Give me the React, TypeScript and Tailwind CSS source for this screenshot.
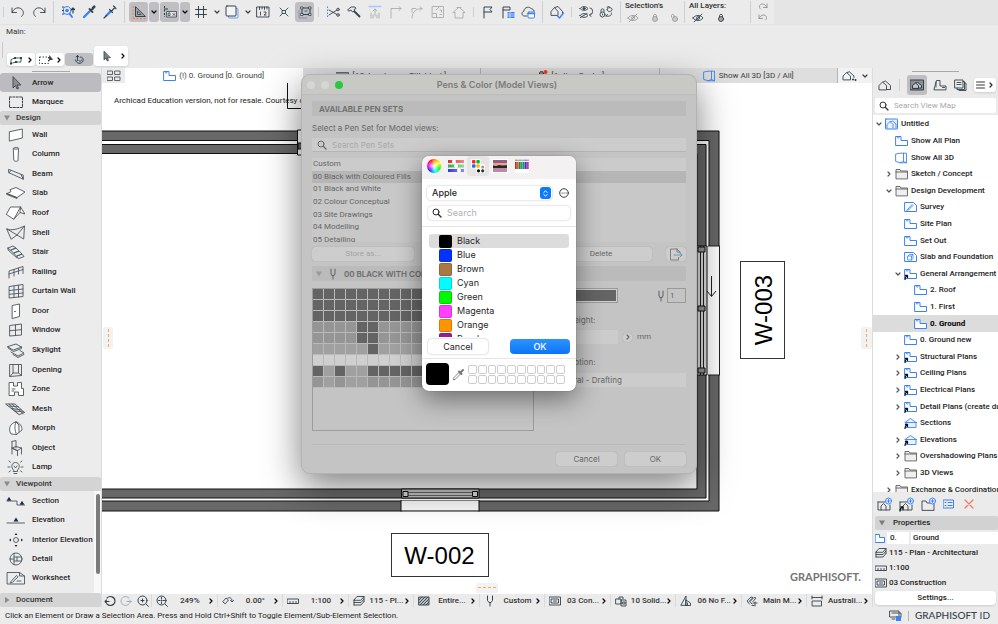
import React from "react";

type IconProps = { children: React.ReactNode; w?: number; h?: number; className?: string };

function Svg({ children, w = 16, h = 16, className = "" }: IconProps) {
  return (
    <svg
      width={w}
      height={h}
      viewBox={`0 0 ${w} ${h}`}
      fill="none"
      stroke="currentColor"
      strokeLinejoin="round"
      strokeLinecap="round"
      aria-hidden="true"
      className={`shrink-0 ${className}`}
    >
      {children}
    </svg>
  );
}

const BLUE = "#3b82f6";

function Chevron({ down = false, className = "" }: { down?: boolean; className?: string }) {
  return (
    <Svg w={6} h={6} className={className}>
      {down ? <path d="M1 2l2 2 2-2" strokeWidth="1.2" /> : <path d="M2 1l2 2-2 2" strokeWidth="1.2" />}
    </Svg>
  );
}

function SearchIcon({ className = "" }: { className?: string }) {
  return (
    <Svg w={10} h={10} className={className}>
      <circle cx="4" cy="4" r="3" />
      <path d="M6.3 6.3L9 9" strokeWidth="1.3" />
    </Svg>
  );
}

function PenFork({ className = "" }: { className?: string }) {
  return (
    <Svg w={8} h={12} className={className}>
      <path d="M2 1v4.500l1 2h2l1-2V1M4 8v3" strokeWidth="1.1" />
    </Svg>
  );
}

/* ---------- plan, folder and view glyphs ---------- */

function PlanIcon({ shortcut = false }: { shortcut?: boolean }) {
  return (
    <Svg w={13} h={12}>
      <path d="M1 1.500h5v4h6.500v5H1z" stroke={BLUE} fill="#fff" />
      <path d="M2.500 1.500v1.500h1.500V1.500" stroke={BLUE} strokeWidth=".7" />
      {shortcut && <path d="M1 11.500c0-2 .5-3 2-3.500M1.500 7.500h2v2" stroke="#111" strokeWidth="1.300" />}
    </Svg>
  );
}

function Cube3D() {
  return (
    <Svg w={13} h={12}>
      <path d="M1 2l4-.8h6.500v9.600H5L1 9.500zM8.500 1.200v8.300l3 1.300M8.500 9.500L5 10.800" stroke={BLUE} strokeWidth=".9" />
    </Svg>
  );
}

function FolderIcon() {
  return (
    <Svg w={13} h={12}>
      <path d="M1 10.500v-9h4l1 1.500h6.500v7.500zM1 4h11.500" fill="#f1efee" stroke="#5b5f63" strokeWidth=".9" />
    </Svg>
  );
}

function HomeIcon({ boxed = false }: { boxed?: boolean }) {
  return (
    <Svg w={boxed ? 13 : 14} h={12}>
      {boxed && <rect x=".5" y="1" width="12" height="10" rx=".5" stroke={BLUE} fill="#eaf2ff" />}
      <path
        d={boxed ? "M2 10V6.500L5 3.500l3 3V10M5.500 3.800L7.500 3l3.500 3V10" : "M1 10.500V6.500L4.500 3l4 3.500v4zM5 3l2.500-1 5 4.500v4h-4"}
        stroke={boxed ? BLUE : "currentColor"}
        strokeWidth=".9"
      />
    </Svg>
  );
}

function WorksheetBlue() {
  return (
    <Svg w={13} h={12}>
      <path d="M1 1.500h8.500l3 3v6H1z" stroke={BLUE} />
      <path d="M3.500 8.500L8 3.500l1 1-4.500 4.500-1.500.3z" stroke={BLUE} fill="#dbe9ff" strokeWidth=".8" />
    </Svg>
  );
}

function DetailBlue() {
  return (
    <Svg w={13} h={12}>
      <path d="M1 1.500h8.500l3 3v6H1z" stroke={BLUE} />
      <path d="M4 5h3.500v4H4zM4 5l1.500-1.500H9L7.500 5M9 3.500v4L7.500 9" stroke={BLUE} strokeWidth=".8" />
    </Svg>
  );
}

function SectionBlue() {
  return (
    <Svg w={13} h={12}>
      <path d="M1.500 5l5-3.500 5 3.500M1 5.500h11.500M2 5.500v5h10v-5" stroke={BLUE} fill="#eaf2ff" strokeWidth=".9" />
      <path d="M1 11.500c0-2 .5-3 2-3.500M1.500 7.500h2v2" stroke="#111" strokeWidth="1.300" />
    </Svg>
  );
}

/* ---------- toolbox glyphs, 20 x 16 ---------- */

const G = (children: React.ReactNode) => (
  <Svg w={20} h={16} className="text-[#4a555c]">
    <g strokeWidth=".9">{children}</g>
  </Svg>
);

const arrowShape = <path d="M8 2v11l2.500-2.500 1.500 3.500 1.500-.7-1.500-3.300h3.500z" fill="#8d8d92" stroke="#3c4650" />;

const designTools: [string, React.ReactNode][] = [
  ["Wall", G(<path d="M4.700 4.700L17.300 2v9L4.700 14z" fill="#fff" />)],
  ["Column", G(<path d="M8.300 2.500c0-1.500 5.200-1.500 5.200 0l-.5 12c0 1-4.200 1-4.200 0zM8.300 2.500c0 1 5.200 1 5.200 0" fill="#fff" />)],
  ["Beam", G(<path d="M4 3.500l14.300 5.700v4L4 6.800zM4 6.800l2-2.500M18.300 13.200L16 8.500" />)],
  ["Slab", G(<path d="M2 8.500l4-1.800-1-2L11 2.500l9 4.500-8 5.500zM2 8.500l10 4V13.500L2 9.500z" fill="#fff" />)],
  ["Roof", G(<path d="M1.500 9L5.500 2h10l4.500 7-5-1.500L9 14zM15.500 2L9 14M15.500 2L15 7.500" fill="#fff" />)],
  ["Shell", G(<path d="M2 4c5 2 11 0 17.500-3l-.8 13-6.700-4-5.500 4zM19.500 1L12 10M2 4l10 6" />)],
  ["Stair", G(<path d="M3 4l5-2 3 2-5 2zM6 6l5-2 3 3-5 2zM9 9l5-2 3 3-5 2zM12 12l5-2 2 2.500-5 2zM3 4v2l9 8" />)],
  ["Railing", G(<path d="M4 14V7l14-4.500v7M4 10l14-4.500M9 12V5.500M13.500 10V4" />)],
  ["Curtain Wall", G(<path d="M4.500 3.500L18 1.500v12l-13.500 1.500zM9 3v11.500M13.500 2.300V14M4.500 7.500L18 6M4.500 11.300L18 10" />)],
  ["Door", G(<path d="M7.500 2.500l7-1.500v12.500l-7 2zM9.500 8.500h1" fill="#fff" />)],
  ["Window", G(<path d="M5 3.500l11.500-1.500v11L5 14zM10.500 3v10.500M5 8.700L16.500 7.700" />)],
  ["Skylight", G(<path d="M3 4.500l8-2.500 5.500 3-8 3zM3 4.500v1.500l5.500 3.500 8-3V5M6 10l7 4 6-3-4-2.500M8 12.500l5 3 6-3" />)],
  ["Opening", G(<path d="M5 2.500h11.500v11L5 14.500zM8 2.500v8.500h5.500V2.500M8 11l-3 3.500M13.500 11l3 2.500" />)],
  ["Zone", G(<path d="M4.500 1.500h4V5h4V1.500h4v6h2v7h-5V11h-4v3.500h-5zM7 8h3M7 10h2" fill="#fff" />)],
  ["Mesh", G(<path d="M1 3h9l9.500 8.500-5 2zM4 5l9.500.8M7 7.500l9.500 1.500M10 10l9 1M4 3l9 10M7 3l11 9.500" />)],
  ["Morph", G(<path d="M11 2c-6 1-8 7-5 12l5.500.5L17 10c0-4-2-7-6-8zM11 2c-2 5-1 8.500.5 12.500M11 2l3 3v7" fill="#fff" />)],
  ["Object", G(<path d="M7 1.500l4-1v7.500M7 1.500V14M7 8l4-1.500 5.500 1.500-4 2.500zM12.500 10.500V16M16.500 8v6M7 8l5.500 2.500" />)],
  [
    "Lamp",
    G(
      <>
        <path d="M8.500 11c-3-2.500-2-7.500 2-7.500s5 5 2 7.500v1.500h-4zM9 14.500h3M9 7l1.500 2L12 7" />
        <path d="M4 2l1.500 1.200M17 2l-1.500 1.200M3 8h2M16 8h2M4 13l1.500-1.200M17 13l-1.500-1.200" />
      </>,
    ),
  ],
];

const dark = "#1f2b3a";

const viewTools: [string, React.ReactNode][] = [
  [
    "Section",
    G(
      <>
        <path d="M2 8h10v4h8" />
        <path d="M2.500 7L4 4.500 5.500 7zM15.500 11L17 8.500 18.500 11z" fill={dark} stroke={dark} />
      </>,
    ),
  ],
  [
    "Elevation",
    G(
      <>
        <path d="M2 11h17.500" />
        <path d="M8.500 9.500l2.500-4 2.500 4z" fill={dark} stroke="none" />
      </>,
    ),
  ],
  [
    "Interior Elevation",
    G(
      <>
        <circle cx="11" cy="8" r="2.500" />
        <path d="M9.500 3L11 1l1.500 2zM9.500 13l1.500 2 1.500-2zM6 6.500L4 8l2 1.500zM16 6.500L18 8l-2 1.500z" fill={dark} stroke="none" />
      </>,
    ),
  ],
  [
    "Detail",
    G(
      <>
        <circle cx="11" cy="8" r="6" />
        <path d="M9 2.300v11.400M9 6h7.500M9 10h7.500M12 6v4M5 8h4" />
      </>,
    ),
  ],
  [
    "Worksheet",
    G(
      <>
        <path d="M2.500 2.500h12L19.500 6v8h-17zM14.500 2.500V6h5" />
        <path d="M6 11.500l5.500-6 1.500 1.300-5.500 5.500-2 .5zM12 11h4" />
      </>,
    ),
  ],
];

function ToolButton({ label, icon, active = false, grow = false }: { label: string; icon: React.ReactNode; active?: boolean; grow?: boolean }) {
  return (
    <button
      type="button"
      className={`flex w-full items-center gap-[7px] whitespace-nowrap pl-[5px] text-left text-[8px] font-medium text-[#262626] ${
        active ? "rounded-[3px] bg-[#bcbbc0]" : ""
      } ${grow ? "min-h-0 flex-1" : "h-[19px] shrink-0"}`}
    >
      {icon}
      {label}
    </button>
  );
}

function SideHeading({ label, open = true }: { label: string; open?: boolean }) {
  return (
    <button type="button" className="flex h-[14px] w-full shrink-0 items-center gap-[6px] rounded-[2px] bg-[#d4d4d4] pl-1 text-left text-[8px] font-medium text-[#333]">
      <Svg w={6} h={6}>
        {open ? <path d="M0 .5h6L3 5.500z" fill="#8b8b8b" stroke="none" /> : <path d="M1 0v6l4.500-3z" fill="#8b8b8b" stroke="none" />}
      </Svg>
      {label}
    </button>
  );
}

function Toolbox() {
  return (
    <aside className="flex w-[102px] shrink-0 flex-col border-r border-[#dcdcdc] bg-[#edecec]">
      <div className="flex h-[5px] shrink-0 justify-center pt-[3px]">
        <div className="h-px w-[38px] bg-[#a9a9a9]" />
      </div>
      <ToolButton active label="Arrow" icon={G(arrowShape)} />
      <ToolButton label="Marquee" icon={G(<rect x="4.500" y="3" width="13" height="10.500" strokeDasharray="2 1.400" stroke="#222c35" />)} />
      <SideHeading label="Design" />
      <div className="flex min-h-0 flex-1 flex-col">
        {designTools.map(([label, icon]) => (
          <ToolButton key={label} label={label} icon={icon} grow />
        ))}
      </div>
      <SideHeading label="Viewpoint" />
      <div className="flex h-[102px] shrink-0 overflow-hidden">
        <div className="flex h-[97px] w-[94px] shrink-0 flex-col">
          {viewTools.map(([label, icon]) => (
            <ToolButton key={label} label={label} icon={icon} grow />
          ))}
        </div>
        <div className="flex-1 bg-[#f8f8f8] px-[2px] pt-[3px]">
          <div className="h-20 w-1 rounded-full bg-[#7b7b7b]" />
        </div>
      </div>
      <SideHeading label="Document" open={false} />
    </aside>
  );
}

/* ---------- top toolbars ---------- */

function Tool({ label, children, tone = "normal", narrow = false, on = false }: { label: string; children: React.ReactNode; tone?: "normal" | "dim"; narrow?: boolean; on?: boolean }) {
  return (
    <button
      type="button"
      aria-label={label}
      className={`flex h-5 items-center justify-center ${narrow ? "w-[9px]" : on ? "w-[19px]" : "w-5"} ${on ? "rounded-[3px] bg-[#bfbec3]" : ""} ${
        tone === "dim" ? "text-[#a9abad]" : "text-[#36424b]"
      }`}
    >
      {children}
    </button>
  );
}

const Sep = ({ tall = false }: { tall?: boolean }) => <div className={`mx-[3px] w-px shrink-0 bg-[#cfcfcf] ${tall ? "h-[22px]" : "h-[10px]"}`} />;

function EyeOff({ className = "" }: { className?: string }) {
  return (
    <Svg w={12} h={10} className={className}>
      <path d="M1 5c2.500-3.500 7.500-3.500 10 0-2.500 3.500-7.500 3.500-10 0zM10 1L2 9" strokeWidth=".9" />
      <circle cx="6" cy="5" r="1.500" strokeWidth=".8" />
    </Svg>
  );
}

function Lock({ className = "", open = false }: { className?: string; open?: boolean }) {
  return (
    <Svg w={10} h={10} className={className}>
      <circle cx="5" cy="6" r="2.500" fill="currentColor" fillOpacity=".4" strokeWidth=".9" />
      <path d={open ? "M1.500 4V2.500c0-1.500 2.500-1.500 2.500 0V4" : "M3.500 4V2.500c0-1.500 3-1.500 3 0V4"} strokeWidth=".9" />
    </Svg>
  );
}

function TopBar() {
  return (
    <header className="h-[68px] shrink-0 bg-[#ebebeb]">
      <div className="flex h-[25px] border-b border-[#e2e2e2] bg-[#e5e5e5]">
        <div className="flex w-[774px] items-center gap-px bg-[#ebebeb]">
          <Sep />
          <Tool label="Undo"><Svg><path d="M2 4v4.500h4.500M2 8.500c2-5 7-6 10-3 2.500 3 1 6-.5 7" strokeWidth=".9" /></Svg></Tool>
          <Tool label="Redo"><Svg><path d="M14 4v4.500H9.500M14 8.500c-2-5-7-6-10-3-2.500 3-1 6 .5 7" strokeWidth=".9" /></Svg></Tool>
          <Sep tall />
          <Tool label="Find and select">
            <Svg>
              <circle cx="7" cy="6.500" r="4" stroke={BLUE} />
              <circle cx="7" cy="6.500" r="1.800" fill={BLUE} stroke="none" />
              <path d="M9.500 9.500l2.500 3.500" stroke={BLUE} strokeWidth="2" />
              <path d="M2.500 3h1M2.500 6.500h1M2.500 10h1M13 9V4M11.500 5.500L13 4l1.500 1.500" strokeWidth="1.200" />
            </Svg>
          </Tool>
          <Tool label="Pick up parameters">
            <Svg>
              <path d="M3 13l5.500-5.500" stroke={BLUE} strokeWidth="2.400" />
              <path d="M8.500 5l3 3M10 6.500l2-2" strokeWidth="1.800" />
              <path d="M12 4l1.300-1.300" strokeWidth="2.600" />
            </Svg>
          </Tool>
          <Tool label="Inject parameters">
            <Svg>
              <path d="M4.500 11.500L8.500 7.500" stroke={BLUE} strokeWidth="2.400" />
              <path d="M2 14l2.500-2.500M7.500 5.500l3 3M9.500 7l3.500-3.500M11.500 2l2.500 2.500" strokeWidth="1.200" />
            </Svg>
          </Tool>
          <Sep tall />
          <div className="flex gap-px">
            <Tool on label="Guide lines">
              <Svg>
                <path d="M2 2v12.500M2 14.500h12.500" stroke="#f08228" strokeDasharray="2 1.500" strokeLinecap="butt" />
                <path d="M4.500 3v9.500h9.500z" fill="#a3a4a9" />
                <path d="M6.500 7.500v3h3z" fill="#bfbec3" strokeWidth=".8" />
              </Svg>
            </Tool>
            <button type="button" aria-label="Guide line options" className="flex h-5 w-[10px] items-center justify-center rounded-[3px] bg-[#bfbec3]"><Chevron down /></button>
            <Tool on label="Tracker">
              <Svg>
                <path d="M2.500 2v2M2.500 5.500v2M2.500 9v2M2.500 12.500v.5M2 5h4" stroke="#2f3a42" strokeLinecap="butt" />
                <path d="M5 7.500h9.500v5.500H5z" fill="#e4e4e7" strokeWidth=".8" />
                <path d="M6.500 9h1.500v2.500H6.500zM11 9.500l2 2M13 9.500l-2 2" strokeWidth=".8" />
              </Svg>
            </Tool>
            <button type="button" aria-label="Tracker options" className="flex h-5 w-[10px] items-center justify-center rounded-[3px] bg-[#bfbec3]"><Chevron down /></button>
          </div>
          <Tool label="Grid"><Svg><path d="M5.500 2.500v11M10.500 2.500v11M2.500 5.500h11M2.500 10.500h11" /></Svg></Tool>
          <Tool narrow label="Grid options"><Chevron down /></Tool>
          <Tool label="Trace reference">
            <Svg>
              <rect x="4.500" y="4.500" width="9.500" height="9.500" rx="1" stroke="#6ba0f5" />
              <rect x="2" y="2" width="10" height="10" rx="1" fill="#f4f4f4" />
            </Svg>
          </Tool>
          <Tool narrow label="Trace options"><Chevron down /></Tool>
          <Tool label="Measure">
            <Svg>
              <path d="M2 3h12v10H2zM4.500 3v2.500M7 3v2M9.500 3v2.500M12 3v2M5.500 8v3M9 8h2v1.500L9 11h2" strokeWidth=".9" />
            </Svg>
          </Tool>
          <Tool label="Explode"><Svg><path d="M4 4l2.500 2.500M12 4L9.500 6.500M4 12l2.500-2.500M12 12L9.500 9.500M6.500 6.500h3v3h-3z" strokeWidth=".9" /></Svg></Tool>
          <Tool on label="Group">
            <Svg>
              <path d="M2 6.500V14h7.500" stroke="#8b8d92" strokeDasharray="1 1" />
              <path d="M5 4h8M5 10.500h8M5 4v6.500M13 4v6.500" />
              <path d="M4 3h2v2H4zM12 3h2v2h-2zM4 9.500h2v2H4zM12 9.500h2v2h-2zM8 7h2" fill="#eee" strokeWidth=".8" />
            </Svg>
          </Tool>
          <Sep />
          <Tool label="Trim">
            <Svg>
              <path d="M2.500 2.500v11" stroke={BLUE} strokeDasharray="1.500 1.500" strokeLinecap="butt" />
              <path d="M4 6l8 4.500M4 11l8-5" strokeWidth=".9" />
              <circle cx="13" cy="5.500" r="1.300" strokeWidth=".9" /><circle cx="13" cy="11" r="1.300" strokeWidth=".9" />
            </Svg>
          </Tool>
          <Tool label="Adjust">
            <Svg><path d="M2 5.500L5 3h4l1 1.500-2 1 .5 1.500L6.500 8 5 6l-2 1z" strokeWidth=".9" /><path d="M8.500 7.500l5 5" strokeWidth="1.800" /></Svg>
          </Tool>
          <Tool tone="dim" label="Extend"><Svg><path d="M2 2.500h12" stroke="#a8c8fb" strokeWidth="1.400" /><path d="M8 12V5M6 7l2-2 2 2M4 9v5M6 11v3M10 11v3M12 9v5" strokeWidth=".9" /></Svg></Tool>
          <Tool tone="dim" label="Corner"><Svg><path d="M3 14V4.500h10M11 2.500l2 2-2 2" strokeWidth=".9" /></Svg></Tool>
          <Tool tone="dim" label="Fillet"><Svg><path d="M3 14c0-5 3-9.500 10-9.500M11 2.500l2 2-2 2M3 8V4.500h4" strokeWidth=".9" /></Svg></Tool>
          <Tool tone="dim" label="Resize"><Svg><rect x="2.500" y="2.500" width="11" height="11" strokeWidth=".9" /><path d="M2.500 9.500h4v4M6 6l3-3M10 6h1.500v2M10 10.500h1.500" strokeWidth=".9" /></Svg></Tool>
          <Tool tone="dim" label="Roof trim"><Svg><path d="M2 8.500L8 3l6 5.500h-2V14H4V8.500zM6 3.500h4" strokeWidth=".9" /></Svg></Tool>
          <Sep />
          <div className="flex">
            <Tool label="Flag"><Svg><path d="M4 14V3h8l-2 2.500L12 8H4" /></Svg></Tool>
            <Tool label="Issue list">
              <Svg><path d="M3 14V3h7v3H3" /><path d="M7.500 8h7v6h-7z" fill={BLUE} stroke="none" /><path d="M7.500 10h7M7.500 12h7M10 8v6" stroke="#fff" strokeWidth=".6" /></Svg>
            </Tool>
            <Tool label="Cloud">
              <Svg><path d="M7 12H4.500C1.500 12 1 8 4 7c0-4 6-5 7.500-2 2 0 3 1.500 2.500 3" strokeWidth=".9" /><rect x="8" y="8" width="6.500" height="6" rx="1" fill="#fff" stroke={BLUE} /><path d="M8 9.500h6.500" stroke={BLUE} strokeWidth="1.600" /></Svg>
            </Tool>
          </div>
          <Sep tall />
          <Tool label="Model check"><Svg><path d="M2 11V7.500L5.500 3.500 9 7.500V11zM6 3.500L9 2.500l4.500 5V9" strokeWidth=".9" /><path d="M8.500 12l2 2 4-5" stroke={BLUE} strokeWidth="1.400" /></Svg></Tool>
          <Sep />
          <div className="flex">
            <Tool label="Layer visibility"><Svg><path d="M2 4.500c2-2.500 6-2.500 8 0-2 2.500-6 2.500-8 0zM2 11.500c2-2.500 6-2.500 8 0-2 2.500-6 2.500-8 0zM2.500 13.500L9 9.500M12 4c2 0 2.500 1.500 2.500 3.500S13.500 11 12 11M13 9.500L11.500 11l1.500 1.500" strokeWidth=".9" /><circle cx="6" cy="4.500" r="1" fill="currentColor" /></Svg></Tool>
            <Tool label="Layer locks"><Svg><circle cx="4.500" cy="10.500" r="2.500" strokeWidth=".9" /><path d="M3 8V6c0-1.500 3-1.500 3 0v2M4.500 10v1M9 3.500c0-1.500 3-1.500 3 0M9 5.500c0-2.500 5-2.500 5 0s-5 3-5 0M8 12c4 1 6-1 5.500-3M8 12l1.500-1.500" strokeWidth=".9" /></Svg></Tool>
          </div>
          <Sep tall />
          <div className="flex h-[22px] w-[55px] shrink-0 flex-col justify-between text-[8px] leading-[10px] font-medium text-[#2f2f2f]">
            <span className="whitespace-nowrap">Selection's</span>
            <div className="flex justify-between pl-[2px] text-[#9a9c9e]">
              <EyeOff /><Lock /><Lock open />
            </div>
          </div>
          <Sep tall />
          <div className="flex h-[22px] w-[57px] shrink-0 flex-col justify-between text-[8px] leading-[10px] font-medium text-[#2f2f2f]">
            <span className="whitespace-nowrap">All Layers:</span>
            <div className="flex gap-3 pl-[3px] text-[#36424b]">
              <EyeOff /><Lock />
            </div>
          </div>
          <Sep tall />
          <div className="flex flex-col gap-[2px] pl-[3px] text-[#8f9193]">
            <Svg w={10} h={9}><path d="M9 2v3.500H5.500M9 5.500C7 1 2 1 1.500 4.500c0 1.500.5 2 1 2.500" strokeWidth=".9" /></Svg>
            <Svg w={10} h={9}><path d="M1 2v3.500h3.500M1 5.500C3 1 8 1 8.500 4.500c0 1.500-.5 2-1 2.500" strokeWidth=".9" /></Svg>
          </div>
        </div>
      </div>
      <div className="px-[6px] pt-[1px] text-[8px] leading-[12px] text-[#333]">Main:</div>
      <div className="flex items-end pt-1 pl-[2px]">
        <div className="mr-1 mb-2 h-4 w-px bg-[#c9c9c9]" />
        <div className="flex items-end gap-px">
          <button type="button" aria-label="Geometry method" className="flex h-[13px] w-7 items-center justify-between rounded-[3px] bg-white px-[2px] shadow-sm">
            <Svg w={16} h={10}><path d="M2 8.500V4.500l4-1.500h6v4H7L2 8.500z" stroke="#36424b" strokeWidth=".9" strokeDasharray="2 1" /><path d="M1 7.500h2v2H1zM5 2h2v2H5zM11 2h2v2h-2zM6 6h2v2H6z" fill="#36424b" stroke="none" /></Svg>
            <Chevron />
          </button>
          <button type="button" aria-label="Selection method" className="flex h-[13px] w-7 items-center justify-between rounded-[3px] bg-white px-[2px] shadow-sm">
            <Svg w={16} h={10}><rect x="1.500" y="2" width="9" height="6.500" strokeDasharray="1.500 1.500" stroke="#36424b" strokeLinecap="butt" /><path d="M11.500 1v4.500L12.700 4.500h1.600z" fill="#222" stroke="#222" strokeWidth=".6" /></Svg>
            <Chevron />
          </button>
          <button type="button" aria-label="Magnet" className="flex h-[13px] w-7 items-center justify-center rounded-[3px] bg-[#bfbec3]">
            <Svg w={12} h={11}><path d="M4.500 1.500v5M4.500 1.500L3 3M4.500 1.500L6 3M2.500 6c.5 4 6 4.500 7.500 1 .8-2-.5-4-2.500-4M6 6.500c.5 1.500 2.500 1 2.500-.5" stroke="#36424b" strokeWidth="1" /></Svg>
          </button>
          <button type="button" aria-label="Arrow tool" className="flex h-5 w-[34px] items-center justify-between rounded-[3px] bg-white pr-[2px] pl-2 shadow-sm">
            <Svg w={10} h={12}><path d="M2 1.500v8.500l2-2 1.300 3 1.200-.6-1.200-2.700H8z" fill="#7b8087" stroke="#36424b" strokeWidth=".8" /></Svg>
            <Chevron />
          </button>
        </div>
      </div>
    </header>
  );
}

/* ---------- centre: tabs, drawing, quick options ---------- */

function Tab({ icon, label, active = false }: { icon: React.ReactNode; label: string; active?: boolean }) {
  return (
    <button
      type="button"
      role="tab"
      aria-selected={active}
      className={`flex min-w-0 flex-1 items-center justify-center gap-[3px] border-r border-[#b5b5b5] text-[8px] whitespace-nowrap text-[#3d3d3d] ${
        active ? "border-none bg-white" : "bg-[#dedede]"
      }`}
    >
      {icon}
      {label}
    </button>
  );
}

function Tabs() {
  return (
    <div role="tablist" className="flex h-[15px] shrink-0">
      <button type="button" aria-label="All tabs" className="flex w-[23px] items-center justify-center bg-[#ebebeb] text-[#5d6468]">
        <Svg w={14} h={12}><path d="M.5 1h5v3.500h-5zM8 1h5v3.500H8zM.5 7h5v3.500h-5zM8 7h5v3.500H8z" /></Svg>
      </button>
      <Tab active icon={<PlanIcon />} label="(!) 0. Ground [0. Ground]" />
      <Tab icon={<Svg w={13} h={10}><rect x=".5" y="1.500" width="12" height="8" fill="#8e9cab" stroke="#5f6c79" /></Svg>} label="[A2. Landscape Titleblock]" />
      <Tab
        icon={<Svg w={13} h={13}><path d="M3 6h8v5H3zM4.500 6V4c0-2 4-2 4 0v2" stroke="#444" fill="#888" /><circle cx="10.500" cy="3" r="2" fill="#ff3b20" stroke="none" /></Svg>}
        label="[Action Center]"
      />
      <Tab icon={<Cube3D />} label="Show All 3D [3D / All]" />
      <button type="button" aria-label="3D view options" className="flex w-[34px] items-center justify-center gap-1 bg-[#f2f2f2] text-[#36424b]">
        <Svg w={16} h={12}>
          <path d="M1 9.500V6L4.500 2.500 8.500 6v3.500zM5 2.500L7.500 1.800 12 6v1.500" strokeWidth=".9" />
          <path d="M10 9.500h2M13.500 9v2" strokeWidth="1.600" strokeLinecap="butt" />
        </Svg>
        <Chevron down />
      </button>
    </div>
  );
}

function Drawing() {
  const wall = "#686868";
  return (
    <svg width="770" height="511" viewBox="102 83 770 511" className="block max-w-none" role="img" aria-label="Floor plan">
      <rect x="102" y="83" width="770" height="511" fill="#fff" />
      <text x="114" y="103" fontSize="8" fontFamily="Roboto, Liberation Sans, sans-serif" fill="#222">Archicad Education version, not for resale. Courtesy of</text>
      <path d="M287.500 83v25.500H320" fill="none" stroke="#111" />
      {/* outer leaf */}
      <path d="M90 131h629v380H90V501h619V140.500H90z" fill={wall} stroke="#111" />
      {/* inner leaf */}
      <path d="M90 144.500h616V498H90v-9h607V153.500H90z" fill={wall} stroke="#111" />
      {/* north opening */}
      <path d="M297.500 130h10v25h-10z" fill="#fff" stroke="#111" />
      <path d="M298 143h6v6h-6z" fill="#666" stroke="#111" />
      {/* east window */}
      <path d="M708 246h12v129h-12z" fill="#fff" />
      <path d="M719.500 246v129M708 246h12M708 375h12" stroke="#222" />
      <path d="M697 246h10v129h-10z" fill="#e4e4e4" stroke="#111" />
      <path d="M700.500 246v129M703.500 246v129" stroke="#222" />
      <path d="M698 247h7v5h-7zM698 306h7v5h-7zM698 368h7v5h-7z" fill="#999" stroke="#111" />
      <path d="M711.500 276v20M707 291l4.500 5.500 4.500-5.500" fill="none" stroke="#222" />
      {/* south window */}
      <path d="M401 501h78v10h-78z" fill="#f8f8f8" />
      <path d="M401 510.500h78" stroke="#777" />
      <path d="M401 500v11.500M479 500v11.500" stroke="#111" />
      <path d="M401.500 489h77.500v9h-77.500z" fill="#c4c4c4" stroke="#111" />
      <path d="M408 492.500h65M408 495.500h65" stroke="#666" />
      <path d="M403 491.500h5v5h-5zM472.500 491.500h5v5h-5z" fill="#ddd" stroke="#111" />
      {/* tags */}
      <rect x="391.500" y="533.500" width="97" height="43" fill="#fff" stroke="#333" />
      <text x="439.500" y="564" textAnchor="middle" fontSize="24" fontFamily="Liberation Sans, Arial, sans-serif" fill="#000">W-002</text>
      <rect x="740.500" y="261.500" width="44" height="97" fill="#fff" stroke="#333" />
      <text x="772" y="310" textAnchor="middle" fontSize="24" fontFamily="Liberation Sans, Arial, sans-serif" fill="#000" transform="rotate(-90 772 310)">W-003</text>
      {/* palette handles */}
      <rect x="103" y="327" width="10" height="22" rx="2" fill="#f2f2f2" />
      <path d="M108.500 329v18" stroke="#f3a662" strokeDasharray="3 2" />
      <rect x="861" y="327" width="11" height="22" rx="2" fill="#f2f2f2" />
      <path d="M866.500 329v18" stroke="#f3a662" strokeDasharray="3 2" />
      <rect x="476" y="583" width="22" height="10" rx="2" fill="#f2f2f2" />
      <path d="M478 587.500h18" stroke="#f3a662" strokeDasharray="3 2" />
      <text x="790" y="581" fontSize="11" fontWeight="700" fontFamily="Lato, sans-serif" fill="#757575">GRAPHISOFT.</text>
    </svg>
  );
}

const layersPath = <path d="M1 5l3-3.500h7L8 5zM1 7.500h7L11 4M1 10h7l3-3.500M1 5v5M11 1.500v5" strokeWidth=".9" />;
const scalePath = <path d="M.5 4h11v4.500H.5zM3 6.500v2M6 6.500v2M9 6.500v2" strokeWidth=".9" />;
const structPath = <path d="M.5 2h11v8H.5zM2.500 4h7v4h-7zM4.500 6h3" strokeWidth=".9" />;

const quickOptions: [string, React.ReactNode][] = [
  ["249%", <g key="z"><circle cx="5.500" cy="5.500" r="4.500" /><path d="M9 9l2.500 2.500M5.500 2.500v1.500M5.500 7v1.500M2.500 5.500h1.500M7 5.500h1.500" /><path d="M5.500 5.500h.1" strokeWidth="1.500" /></g>],
  ["0.00°", <path key="r" d="M1 6.500l3-3.500 2.500 2-3 3.500zM6 3c2-1 4 0 4 3M8.500 5.500L10 7l1.500-1.500" strokeWidth=".9" />],
  ["1:100", scalePath],
  ["115 - Pl...", layersPath],
  ["Entire...", <g key="e" strokeWidth=".9"><path d="M1 2h10v8H1z" fill="currentColor" fillOpacity=".25" /><path d="M1 5l3-3M1 8l6-6M2 10l8-8M5 10l6-6M8 10l3-3" /></g>],
  ["Custom", <path key="c" d="M3.500 1v4.500l1.500 2h2l1.500-2V1M6 8v3" />],
  ["03 Con...", structPath],
  ["10 Solid...", <path key="s" d="M1 4h5v5H1zM4 4V2h4v2M6.500 5H11v6H6.500zM8 7h2v2H8z" strokeWidth=".9" />],
  ["06 No F...", <path key="n" d="M1 10L6 1v9zM6 5l4.500 3v2.500H6zM7.500 8v2" strokeWidth=".9" />],
  ["Main M...", <path key="m" d="M3.500 9L1 6l4-4 2 .5-4 4M6 9L4 6.500l4-4 2 .5-3 3.500M7 8h4M9 7v4M6 10.500h2" strokeWidth=".9" />],
  ["Australi...", <path key="a" d="M1 2.500h10M1 1v3M11 1v3M1.500 6h9v5h-9z" strokeWidth=".9" />],
];

function QuickBar() {
  return (
    <div className="flex h-[13px] shrink-0 bg-[#ebebeb] text-[#36424b]">
      <div className="flex w-[49px] items-center justify-around">
        <Svg w={12} h={12}><path d="M1 6.500h4M1 6.500L2.500 5M1 6.500L2.500 8M3 3c3-3 8-1 8 3s-5 6-8 3" strokeWidth="1.100" /></Svg>
        <Svg w={12} h={12} className="text-[#a9abad]"><path d="M11 6.500H7M11 6.500L9.500 5M11 6.500L9.500 8M9 3C6 0 1 2 1 6s5 6 8 3" /></Svg>
        <Svg w={12} h={12}><circle cx="5.500" cy="5.500" r="4.500" /><path d="M9 9l2.500 2.500M5.500 4v3M4 5.500h3" /></Svg>
      </div>
      {quickOptions.map(([label, icon]) => (
        <button key={label} type="button" className="flex min-w-0 flex-1 items-center border-l border-[#dadada] pr-[3px] pl-1 text-[8px] font-medium whitespace-nowrap text-[#333]">
          <Svg w={12} h={12} className="text-[#36424b]">{icon}</Svg>
          <span className="min-w-0 flex-1 pl-1 text-center">{label}</span>
          <Chevron className="text-black" />
        </button>
      ))}
    </div>
  );
}

/* ---------- navigator ---------- */

type Node = { label: string; depth: number; icon: React.ReactNode; state?: "open" | "closed"; current?: boolean };

const tree: Node[] = [
  { label: "Untitled", depth: 0, icon: <HomeIcon boxed />, state: "open" },
  { label: "Show All Plan", depth: 1, icon: <PlanIcon /> },
  { label: "Show All 3D", depth: 1, icon: <Cube3D /> },
  { label: "Sketch / Concept", depth: 1, icon: <FolderIcon />, state: "closed" },
  { label: "Design Development", depth: 1, icon: <FolderIcon />, state: "open" },
  { label: "Survey", depth: 2, icon: <WorksheetBlue /> },
  { label: "Site Plan", depth: 2, icon: <PlanIcon /> },
  { label: "Set Out", depth: 2, icon: <PlanIcon /> },
  { label: "Slab and Foundation", depth: 2, icon: <DetailBlue /> },
  { label: "General Arrangement", depth: 2, icon: <PlanIcon shortcut />, state: "open" },
  { label: "2. Roof", depth: 3, icon: <PlanIcon /> },
  { label: "1. First", depth: 3, icon: <PlanIcon /> },
  { label: "0. Ground", depth: 3, icon: <PlanIcon />, current: true },
  { label: "0. Ground new", depth: 2, icon: <PlanIcon /> },
  { label: "Structural Plans", depth: 2, icon: <PlanIcon shortcut />, state: "closed" },
  { label: "Ceiling Plans", depth: 2, icon: <PlanIcon shortcut />, state: "closed" },
  { label: "Electrical Plans", depth: 2, icon: <PlanIcon shortcut />, state: "closed" },
  { label: "Detail Plans (create duplicates)", depth: 2, icon: <PlanIcon shortcut />, state: "closed" },
  { label: "Sections", depth: 2, icon: <SectionBlue /> },
  { label: "Elevations", depth: 2, icon: <SectionBlue />, state: "closed" },
  { label: "Overshadowing Plans", depth: 2, icon: <FolderIcon />, state: "closed" },
  { label: "3D Views", depth: 2, icon: <FolderIcon />, state: "closed" },
  { label: "Exchange & Coordination", depth: 1, icon: <FolderIcon />, state: "closed" },
];

const indent = ["pl-[3px]", "pl-[13px]", "pl-[22px]", "pl-[32px]"];

function Navigator() {
  return (
    <aside className="flex w-[126px] shrink-0 flex-col overflow-hidden border-l border-[#dcdcdc] bg-[#ebebeb] text-[8px] font-medium text-[#222]">
      <div className="flex h-[5px] shrink-0 justify-center pt-[3px]">
        <div className="h-px w-[47px] bg-[#a9a9a9]" />
      </div>
      <div className="flex h-6 shrink-0 items-center justify-between pr-[2px] pl-[5px] text-[#36424b]">
        <button type="button" aria-label="Project map"><HomeIcon /></button>
        <div className="h-3 w-px bg-[#cfcfcf]" />
        <button type="button" aria-label="View map" className="flex h-5 w-5 items-center justify-center rounded-[3px] bg-[#bfbec3]">
          <Svg w={14} h={12}><rect x=".5" y="1" width="13" height="10" fill="#8b8e93" /><path d="M2.500 9V6.500L5.500 4l3 2.500V9zM6 4l1.500-.7L11.500 6.500V9h-3" strokeWidth=".9" stroke="#222c35" fill="#c6c6ca" /></Svg>
        </button>
        <button type="button" aria-label="Layout book"><Svg w={14} h={12}><path d="M1 10.500L3.500 1.500h3.500v5.500h6v3.500zM9.500 8.500h2M3 8V3" strokeWidth=".9" /></Svg></button>
        <button type="button" aria-label="Publisher sets"><Svg w={13} h={12}><path d="M1 1h8v8H1zM9 2.500h1.500v8H3V9M10.500 4H12v7.500H5M3 3.500h4M3 5.500h4" strokeWidth=".9" /></Svg></button>
        <button type="button" aria-label="Navigator menu" className="flex h-[14px] w-[22px] items-center justify-around rounded-[3px] bg-white text-[#222] shadow-sm">
          <Svg w={9} h={8}><path d="M.5 1h8M.5 4h8M.5 7h8" strokeWidth=".9" /></Svg>
          <Chevron />
        </button>
      </div>
      <label className="mx-[2px] mt-px flex h-[15px] shrink-0 items-center gap-[5px] rounded-[2px] bg-white pl-1 text-[#333]">
        <SearchIcon />
        <input type="text" aria-label="Search view map" placeholder="Search View Map" className="w-full bg-transparent text-[8px] font-normal outline-none placeholder:text-[#a9a9a9]" />
      </label>
      <div className="mt-[2px] min-h-0 flex-1 overflow-hidden bg-white">
        <div className="flex h-[383px] flex-col pt-px">
          {tree.map((n) => (
            <button
              key={n.label}
              type="button"
              className={`flex min-h-0 flex-1 items-center gap-[3px] whitespace-nowrap ${indent[n.depth]} ${n.current ? "bg-[#dcdcdc] font-bold text-black" : ""}`}
            >
              <span className="flex w-[6px] shrink-0 text-[#555]">{n.state && <Chevron down={n.state === "open"} />}</span>
              {n.icon}
              <span>{n.label}</span>
            </button>
          ))}
        </div>
      </div>
      <div className="flex h-6 shrink-0 items-center gap-[7px] pl-1 text-[#36424b]">
        {[0, 1, 2].map((i) => (
          <button key={i} type="button" aria-label={["Save view", "Clone folder", "New folder"][i]}>
            <Svg w={15} h={15}>
              <path d={i === 2 ? "M1 13V4h4l1 2h7v7z" : "M1 5h7M1 5v8h12V8M4 13V9l2.500-2.500L9 9v4"} strokeWidth=".9" />
              {i === 1 && <path d="M1 14c0-2 .5-3 2-3.500M2 10h2v2" stroke="#111" strokeWidth="1.300" />}
              <circle cx="11.500" cy="4" r="3" fill="#fff" stroke={BLUE} />
              <path d="M11.500 2.500v3M10 4h3" stroke={BLUE} />
            </Svg>
          </button>
        ))}
        <button type="button" aria-label="View settings"><Svg w={11} h={10}><path d="M.5 1h10v8H.5zM2 3.500h1M2 6.500h1M5 3.500h4M5 6.500h4" stroke={BLUE} /></Svg></button>
        <button type="button" aria-label="Delete view" className="ml-[3px]"><Svg w={10} h={10}><path d="M1 1l8 8M9 1L1 9" stroke="#f47762" strokeWidth="1.200" /></Svg></button>
      </div>
      <div className="flex h-[91px] shrink-0 flex-col pl-[2px]">
        <button type="button" className="flex h-[14px] items-center gap-2 rounded-[2px] bg-[#d2d2d2] pl-1 text-left">
          <Svg w={6} h={6}><path d="M0 .5h6L3 5.500z" fill="#7b7b7b" stroke="none" /></Svg>
          Properties
        </button>
        <div className="mt-[2px] flex items-center gap-[2px]">
          <Svg w={10} h={10}><path d="M.5 1.500h4v3h5v5h-9z" stroke={BLUE} fill="#fff" /></Svg>
          <input aria-label="View ID" defaultValue="0." className="h-3 w-[22px] bg-white pl-[3px] outline-none" />
          <input aria-label="View name" defaultValue="Ground" className="h-3 min-w-0 flex-1 bg-white pl-[2px] outline-none" />
        </div>
        <div className="flex flex-1 flex-col justify-around py-px">
          {([["115 - Plan - Architectural", layersPath], ["1:100", scalePath], ["03 Construction", structPath]] as [string, React.ReactNode][]).map(([t, p]) => (
            <div key={t} className="flex items-center gap-[2px] whitespace-nowrap">
              <Svg w={12} h={12} className="text-[#36424b]">{p}</Svg>
              {t}
            </div>
          ))}
        </div>
        <button type="button" className="mr-[2px] mb-[2px] h-[14px] rounded-[4px] bg-white shadow-sm">Settings...</button>
      </div>
    </aside>
  );
}

/* ---------- pens & color dialog ---------- */

const penSets = ["Custom", "00 Black with Coloured Fills", "01 Black and White", "02 Colour Conceptual", "03 Site Drawings", "04 Modelling", "05 Detailing"];

const penRows = [
  "dddddddddddddddddddd",
  "dddddddddddddddddddd",
  "dddddddddddddddddddd",
  "mmmmddmmmmmmmmmmmmmm",
  "mmmmddmmmmmmmmmmmmmm",
  "nnnnndnnnnnnnnnnnnnn",
  "llllllllllllllllllll",
  "dndnnddddddddddddddd",
  "mnmnnmmmmmmmmmmmmmmm",
];

const penColors: Record<string, string> = { d: "bg-[#646464]", m: "bg-[#959595]", n: "bg-[#a0a0a0]", l: "bg-[#cfcfcf]" };

const softButton = "flex items-center justify-center rounded-[3px] bg-[#cdcdcd] shadow-[0_0_1px_rgba(0,0,0,0.25)]";

function PensDialog() {
  return (
    <section
      role="dialog"
      aria-label="Pens & Color (Model Views)"
      className="relative flex h-[400px] w-[396px] flex-col rounded-[9px] border border-[#b3b3b3] bg-[#c4c4c4] text-[8px] text-[#666] shadow-[0_12px_36px_rgba(0,0,0,0.5)]"
    >
      <div className="flex h-[20px] shrink-0 items-center justify-center rounded-t-[9px] border-b border-[#bdbdbb] bg-[#c8c8c5]">
        <div className="flex w-12 items-center gap-[6px] pl-[5px]">
          <span className="h-2 w-2 rounded-full bg-[#d6d6d4]" />
          <span className="h-2 w-2 rounded-full bg-[#d6d6d4]" />
          <span className="h-2 w-2 rounded-full bg-[#28c840]" />
        </div>
        <h1 className="flex-1 pr-[52px] text-center font-[Inter,sans-serif] text-[9px] font-semibold text-[#7b7b7b]">Pens &amp; Color (Model Views)</h1>
      </div>
      <div className="flex flex-1 flex-col px-[10px] pt-[6px]">
        <h2 className="flex h-[15px] items-center bg-[#bbbbbb] pl-[7px] font-[Inter,sans-serif] font-semibold text-[#6b6b6b]">AVAILABLE PEN SETS</h2>
        <p className="mt-[6px] font-[Inter,sans-serif] leading-[12px]">Select a Pen Set for Model views:</p>
        <label className="mt-1 flex h-[14px] items-center gap-[5px] border-b border-[#b5b5b5] bg-[#cccccc] pl-[5px]">
          <SearchIcon />
          <input type="text" aria-label="Search pen sets" placeholder="Search Pen Sets" className="w-full bg-transparent font-[Inter,sans-serif] outline-none placeholder:text-[#a9a9a9]" />
        </label>
        <div className="mt-[6px] flex h-[84px] flex-col overflow-hidden">
          <ul className="flex h-[88px] flex-1 shrink-0 basis-[88px] flex-col">
            {penSets.map((name, i) => (
              <li key={name} className={`flex min-h-0 flex-1 items-center pl-[1px] whitespace-nowrap ${i === 1 ? "bg-[#b6b6b6]" : i === 0 ? "bg-[#cbcbcb]" : "bg-[#c8c8c8]"}`}>
                {name}
              </li>
            ))}
          </ul>
        </div>
        <div className="mt-[5px] flex h-[14px] gap-[14px]">
          <button type="button" disabled className={`${softButton} w-[102px] text-[#a3a3a3]`}>Store as...</button>
          <button type="button" className={`${softButton} ml-auto w-[102px]`}>Delete</button>
          <button type="button" aria-label="Export" className={`${softButton} w-5`}>
            <Svg w={14} h={13}><path d="M8 1H1.500v11H9.500V9.500M8 1v3h3L8 1M11 4v1" stroke="#777" strokeWidth=".9" /><path d="M5 7h8M11 5l2 2-2 2" stroke="#6f93c9" /></Svg>
          </button>
        </div>
        <h2 className="mt-[5px] flex h-[15px] items-center overflow-hidden bg-[#bbbbbb] pl-1 font-[Inter,sans-serif] font-semibold whitespace-nowrap text-[#6b6b6b]">
          <Svg w={6} h={6}><path d="M0 .5h6L3 5.500z" fill="#999" stroke="none" /></Svg>
          <PenFork className="mx-[7px]" />
          00 BLACK WITH COLOURED FILLS
        </h2>
        <div className="mt-[7px] flex gap-4">
          <div className="h-[143px] w-[222px] border border-[#9c9c9c]">
            {penRows.map((row, y) => (
              <div key={y} className="flex">
                {row.split("").map((c, x) => (
                  <span key={x} className={`h-[11px] w-[11px] border-r border-b border-[#b9b9b9] ${penColors[c]}`} />
                ))}
              </div>
            ))}
          </div>
          <div className="flex flex-1 flex-col">
            <div className="flex items-center justify-between">
              <div className="h-[15px] w-[68px] border border-[#999] bg-[#646464] ring-1 ring-[#cfcfcf] ring-inset" />
              <label className="flex items-center gap-[2px]">
                <PenFork />
                <input aria-label="Pen number" defaultValue="1" className="h-[15px] w-[19px] border border-[#999] bg-transparent pl-[2px] outline-none" />
              </label>
            </div>
            <label htmlFor="pen-weight" className="mt-[11px] font-[Inter,sans-serif] leading-[12px]">Pen Weight:</label>
            <div className="mt-1 flex items-center gap-[5px]">
              <input id="pen-weight" className="h-[14px] w-[68px] bg-[#cccccc] pl-1 outline-none" />
              <button type="button" aria-label="Weight presets" className={`${softButton} h-[9px] w-[9px]`}><Chevron /></button>
              mm
            </div>
            <label htmlFor="pen-desc" className="mt-[12px] font-[Inter,sans-serif] leading-[12px]">Description:</label>
            <input id="pen-desc" defaultValue="General - Drafting" className="mt-[5px] h-[14px] w-full bg-[#cccccc] pl-1 font-[Inter,sans-serif] outline-none" />
          </div>
        </div>
        <div className="mt-auto mb-[7px] flex justify-end gap-2 border-t border-[#b8b8b8] pt-[7px] font-[Inter,sans-serif]">
          <button type="button" className={`${softButton} h-[14px] w-[61px]`}>Cancel</button>
          <button type="button" className={`${softButton} h-[14px] w-[61px]`}>OK</button>
        </div>
      </div>
    </section>
  );
}

/* ---------- colour picker sheet ---------- */

const colours: [string, string][] = [
  ["Black", "bg-black"],
  ["Blue", "bg-[#0433ff]"],
  ["Brown", "bg-[#aa7942]"],
  ["Cyan", "bg-[#00fdff]"],
  ["Green", "bg-[#00f900]"],
  ["Magenta", "bg-[#ff40ff]"],
  ["Orange", "bg-[#ff9300]"],
  ["Purple", "bg-[#942192]"],
];

function ColourModes() {
  const cell = "flex h-[20px] w-[22px] items-center justify-center rounded-[3px]";
  return (
    <div className="flex h-[23px] shrink-0 items-start rounded-t-[7px] bg-[#f3f1f1] px-px">
      <button type="button" aria-label="Color wheel" className={cell}>
        <span className="h-[14px] w-[14px] rounded-full bg-[radial-gradient(circle,white_0%,transparent_65%),conic-gradient(#f80,#ff0_60deg,#0f0_110deg,#0ff_170deg,#22f_220deg,#f0f_280deg,#f00_330deg,#f80)]" />
      </button>
      <button type="button" aria-label="Color sliders" className={cell}>
        <Svg w={16} h={14}>
          <defs>
            <linearGradient id="r"><stop offset="0" stopColor="#e02c2c" /><stop offset="1" stopColor="#f08a8a" /></linearGradient>
            <linearGradient id="g"><stop offset="0" stopColor="#2fae4a" /><stop offset="1" stopColor="#8fdc9e" /></linearGradient>
            <linearGradient id="b"><stop offset="0" stopColor="#3b33dd" /><stop offset="1" stopColor="#8f8af0" /></linearGradient>
          </defs>
          <g stroke="none">
            <rect y="1" width="16" height="3" fill="url(#r)" /><circle cx="6" cy="2.500" r="2" fill="#fff" />
            <rect y="5.500" width="16" height="3" fill="url(#g)" /><circle cx="8" cy="7" r="2" fill="#fff" />
            <rect y="10" width="16" height="3" fill="url(#b)" /><circle cx="11" cy="11.500" r="2" fill="#fff" />
          </g>
        </Svg>
      </button>
      <button type="button" aria-label="Color palettes" className={`${cell} bg-[#e6e4e4]`}>
        <Svg w={14} h={14}>
          <g stroke="none">
            <rect x="5" y="5" width="9" height="9" rx="1" fill="#fafafa" /><rect x="0" y="0" width="9.500" height="9.500" rx="1" fill="#fff" />
            <rect x="1" y="1" width="3.500" height="3.500" rx="1" fill="#f22" /><rect x="5.300" y="1" width="3.500" height="3.500" rx="1" fill="#0b2" />
            <rect x="1" y="5.300" width="3.500" height="3.500" rx="1" fill="#26f" /><rect x="5.300" y="5.300" width="3.500" height="3.500" rx="1" fill="#fb0" />
            <circle cx="11.700" cy="8" r="1.500" fill="#999" /><circle cx="7.500" cy="11.800" r="1.600" fill="#111" /><circle cx="11.700" cy="11.800" r="1.600" fill="#333" />
          </g>
        </Svg>
      </button>
      <button type="button" aria-label="Image palettes" className={cell}>
        <Svg w={16} h={14}>
          <g stroke="none">
            <rect width="16" height="14" fill="#fff" /><rect x="1" y="1" width="14" height="12" fill="#8f5f86" />
            <rect x="1" y="4" width="14" height="3" fill="#f0a37c" /><path d="M1 6.500L4 7l3-1 3 .5 5-.3V9H1z" fill="#232436" />
            <rect x="1" y="9" width="14" height="4" fill="#b98aa0" />
          </g>
        </Svg>
      </button>
      <button type="button" aria-label="Pencils" className={cell}>
        <Svg w={14} h={14}>
          <g stroke="none">
            {["#a33", "#c62", "#284", "#2a4", "#27d", "#539", "#c3a"].map((c, i) => (
              <g key={c} fill={c}><rect x={i * 2} y="3" width="1.700" height="7" /><circle cx={i * 2 + 1} cy="1.300" r=".7" /></g>
            ))}
            <rect y="10" width="14" height="4" fill="#fff" />
          </g>
        </Svg>
      </button>
    </div>
  );
}

function ColourSheet() {
  return (
    <section
      role="dialog"
      aria-label="Colors"
      className="absolute top-[82px] left-1/2 flex w-[154px] -translate-x-1/2 flex-col rounded-[7px] bg-white font-[Inter,sans-serif] text-[9px] text-[#262626] shadow-[0_8px_26px_rgba(0,0,0,0.45),0_0_1px_rgba(0,0,0,0.5)]"
    >
      <ColourModes />
      <div className="mt-[7px] flex items-center justify-between pr-[7px] pl-[5px]">
        <div className="grid w-[125px] items-center rounded-[4px] shadow-[0_0_2px_rgba(0,0,0,0.3)]">
          <select aria-label="Palette" className="col-start-1 row-start-1 h-[14px] appearance-none bg-transparent pl-[5px] font-medium outline-none">
            <option>Apple</option>
          </select>
          <span className="pointer-events-none col-start-1 row-start-1 mr-px flex h-[12px] w-[11px] items-center justify-center justify-self-end rounded-[3px] bg-[#0a7aff] text-white">
            <Svg w={7} h={9}><path d="M1.800 3.500l1.700-1.700 1.700 1.700M1.800 5.500l1.700 1.700 1.700-1.700" /></Svg>
          </span>
        </div>
        <button type="button" aria-label="Palette options">
          <Svg w={10} h={10}><circle cx="5" cy="5" r="4.300" strokeWidth=".9" /><path d="M3 5h.1M5 5h.1M7 5h.1" strokeWidth="1.100" /></Svg>
        </button>
      </div>
      <label className="mx-[6px] mt-[6px] flex h-[14px] items-center gap-[5px] rounded-[4px] pl-1 shadow-[0_0_2px_rgba(0,0,0,0.3)]">
        <SearchIcon />
        <input type="text" aria-label="Search colors" placeholder="Search" className="w-full bg-transparent outline-none placeholder:text-[#b0b0b0]" />
      </label>
      <div className="mt-[6px] border-t border-[#e6e6e6]" />
      <ul className="mt-[7px] h-[103px] overflow-hidden px-[7px]">
        {colours.map(([name, bg], i) => (
          <li key={name} className={`flex h-[14px] items-center gap-[5px] rounded-[3px] pl-[10px] ${i === 0 ? "bg-[#dcdcdc]" : ""}`}>
            <span className={`h-[13px] w-[13px] rounded-[2px] border border-black/15 ${bg}`} />
            {name}
          </li>
        ))}
      </ul>
      <div className="mt-[2px] flex justify-between px-[6px]">
        <button type="button" className="h-[15px] w-[60px] rounded-[4px] shadow-[0_0_2px_rgba(0,0,0,0.35)]">Cancel</button>
        <button type="button" className="h-[15px] w-[60px] rounded-[4px] bg-gradient-to-b from-[#2b93ff] to-[#0a75f5] font-medium text-white">OK</button>
      </div>
      <div className="mt-[4px] border-t border-[#e6e6e6]" />
      <div className="flex items-center pt-1 pb-[6px] pl-1">
        <span className="h-[22px] w-[23px] rounded-[4px] bg-black" />
        <button type="button" aria-label="Eyedropper" className="ml-[3px] text-[#777]">
          <Svg w={13} h={13}><path d="M1.500 11.500l.5-2 5-5 1.500 1.500-5 5z" strokeWidth=".9" /><path d="M7 3.500L9.500 6M8.500 4.500L11 2" strokeWidth="2" /></Svg>
        </button>
        <div className="ml-[3px] grid w-[97px] grid-cols-10 gap-px">
          {Array.from({ length: 20 }, (_, i) => (
            <span key={i} className="h-[9px] rounded-[2px] border border-[#cdcdcd]" />
          ))}
        </div>
      </div>
    </section>
  );
}

export default function App() {
  return (
    <div className="relative flex h-screen w-full flex-col overflow-hidden bg-[#ebebeb] font-[Roboto,Inter,sans-serif]">
      <TopBar />
      <div className="flex min-h-0 flex-1">
        <Toolbox />
        <main className="flex min-w-0 flex-1 flex-col">
          <Tabs />
          <div className="min-h-0 flex-1 overflow-hidden bg-white">
            <Drawing />
          </div>
          <QuickBar />
        </main>
        <Navigator />
      </div>
      <footer className="flex h-[17px] shrink-0 items-center justify-between pr-2 pl-[5px] text-[8px] text-[#222]">
        <span className="whitespace-nowrap">Click an Element or Draw a Selection Area. Press and Hold Ctrl+Shift to Toggle Element/Sub-Element Selection.</span>
        <span className="flex items-center gap-[6px] text-[#36424b]">
          <Svg w={13} h={12}><path d="M1 1h9v6H1zM3 9h3M3 3h9v4" strokeWidth=".9" /><rect x="7" y="6" width="5" height="5" fill={BLUE} stroke="none" /></Svg>
          <span className="h-[10px] w-px bg-[#b5b5b5]" />
          <span className="font-[Lato,sans-serif] text-[10px]"><b className="font-medium">GRAPHISOFT</b> ID</span>
        </span>
      </footer>
      <div className="pointer-events-none absolute inset-0 flex items-start justify-center pt-[74px]">
        <div className="pointer-events-auto relative">
          <PensDialog />
          <ColourSheet />
        </div>
      </div>
    </div>
  );
}
